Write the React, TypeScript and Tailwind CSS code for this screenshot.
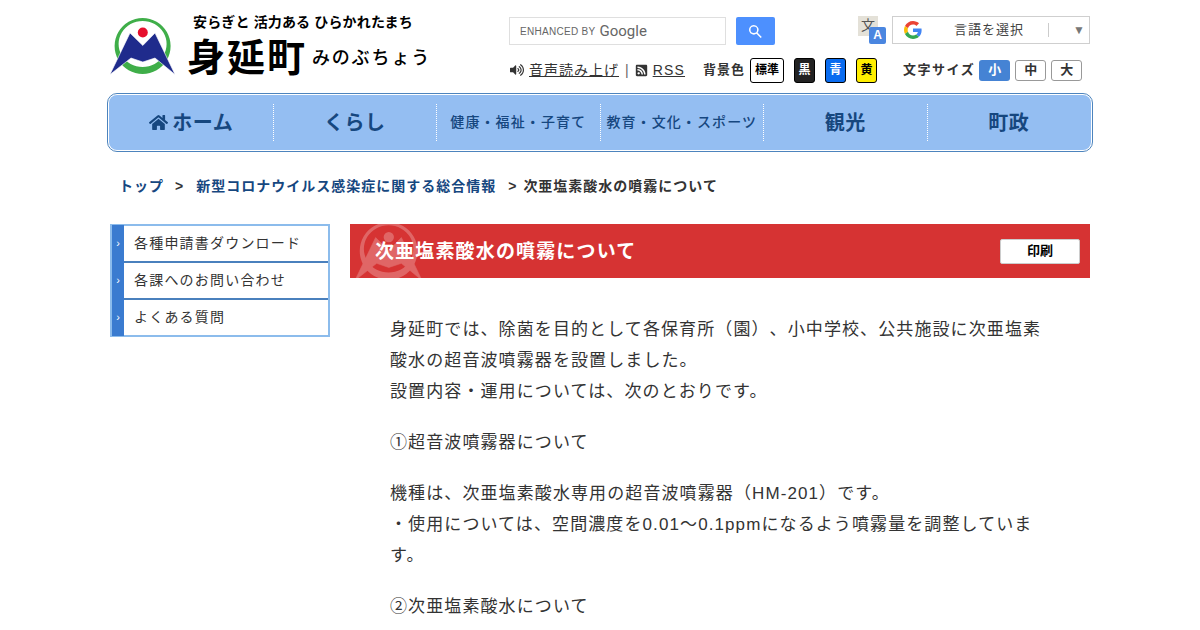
import { FaHome, FaRssSquare, FaVolumeUp } from "react-icons/fa"

const jp = "font-['Liberation_Sans','Noto_Sans_CJK_JP',sans-serif]"

function Logo({ mono = false, className = "" }: { mono?: boolean; className?: string }) {
  return (
    <svg viewBox="0 0 65 60" className={className}>
      <path
        fillRule="evenodd"
        d="M32.6 1a28 28 0 1 0 .01 0ZM32.6 4a24 23 0 1 1-.01 0Z"
        fill={mono ? "#fff" : "#3fae49"}
      />
      <circle cx="32.8" cy="15.5" r="5" fill={mono ? "#fff" : "#e60f2d"} />
      <path
        d="M0 57.500L20 16L32.800 28.500L45 16L65 57.500L45 41L32.800 45L21 41Z"
        fill={mono ? "#fff" : "#1f2b8c"}
        stroke="#fff"
        strokeWidth="0.6"
      />
    </svg>
  )
}

function GoogleG() {
  return (
    <svg viewBox="0 0 48 48" className="w-[18px] h-[18px]">
      <path fill="#EA4335" d="M24 9.500c3.540 0 6.710 1.220 9.210 3.600l6.850-6.850C35.900 2.380 30.470 0 24 0 14.620 0 6.510 5.380 2.560 13.220l7.980 6.190C12.430 13.720 17.740 9.500 24 9.500z" />
      <path fill="#4285F4" d="M46.980 24.550c0-1.570-.15-3.090-.38-4.550H24v9.020h12.940c-.58 2.960-2.260 5.480-4.780 7.180l7.730 6c4.510-4.180 7.090-10.360 7.090-17.650z" />
      <path fill="#FBBC05" d="M10.530 28.590c-.48-1.450-.76-2.990-.76-4.590s.27-3.140.76-4.590l-7.980-6.190C.92 16.460 0 20.120 0 24c0 3.880.92 7.540 2.560 10.780l7.970-6.190z" />
      <path fill="#34A853" d="M24 48c6.480 0 11.930-2.130 15.890-5.810l-7.730-6c-2.150 1.450-4.920 2.300-8.160 2.300-6.260 0-11.570-4.220-13.470-9.910l-7.980 6.190C6.510 42.620 14.620 48 24 48z" />
    </svg>
  )
}

function TranslateIcon() {
  return (
    <div className="relative w-[28px] h-[28px] shrink-0">
      <div className="w-[20px] h-[20px] bg-[#e4e1d8] text-[#555] text-[14px] leading-[19px] text-center">文</div>
      <div className="absolute right-0 bottom-0 w-[17px] h-[17px] bg-[#4a86e0] rounded-[2px] text-white text-[12px] leading-[17px] font-bold text-center">
        A
      </div>
    </div>
  )
}

const navItems = [
  { label: "ホーム", big: true, home: true },
  { label: "くらし", big: true },
  { label: "健康・福祉・子育て", big: false },
  { label: "教育・文化・スポーツ", big: false },
  { label: "観光", big: true },
  { label: "町政", big: true },
]

const sideItems = ["各種申請書ダウンロード", "各課へのお問い合わせ", "よくある質問"]

export default function App() {
  return (
    <div className={`h-[630px] overflow-hidden bg-white text-[#333] [text-spacing-trim:space-all] ${jp}`}>
      <div className="w-[980px] mx-auto">
        {/* Header */}
        <header className="flex h-[93px]">
          <div className="w-[399px] flex pt-[17px]">
            <Logo className="w-[65px] h-[60px] shrink-0" />
            <div className="ml-[14px] -mt-[5px] text-black">
              <div className="ml-[4px] text-[14px] leading-[20px] font-bold tracking-[0.15px] whitespace-nowrap">
                安らぎと 活力ある ひらかれたまち
              </div>
              <div className="flex items-center mt-[3px] whitespace-nowrap">
                <span className="-ml-[2px] text-[38px] leading-[46px] font-bold tracking-[2px]">身延町</span>
                <span className="ml-[5px] text-[18px] tracking-[1.800px] font-medium">みのぶちょう</span>
              </div>
            </div>
          </div>

          <div className="w-[581px] shrink-0">
            <div className="flex pt-[16px] h-[45px]">
              <div className="flex items-center w-[217px] h-[28px] mt-[1px] border border-[#dfdfdf] pl-[10px] text-[#666] whitespace-nowrap">
                <span className="text-[10px] tracking-[0.3px]">ENHANCED BY</span>
                <span className="ml-[4px] text-[15px] font-['Roboto',sans-serif]">Google</span>
              </div>
              <div className="flex items-center justify-center w-[39px] h-[28px] mt-[1px] ml-[10px] bg-[#4d90fe] rounded-[2px]">
                <svg viewBox="0 0 13 13" className="w-[13px] h-[13px]" fill="#fff">
                  <path d="m4.800 0a4.800 4.800 0 0 1 3.800 7.700l4.200 4.200-1.100 1.100-4.200-4.200a4.800 4.800 0 1 1-2.700-8.800zm0 1.500a3.300 3.300 0 1 0 0 6.600 3.300 3.300 0 0 0 0-6.600z" />
                </svg>
              </div>
              <div className="ml-[83px] flex-none">
                <TranslateIcon />
              </div>
              <div className="flex items-center ml-[6px] w-[198px] h-[28px] border border-[#cfcfcf] pl-[11px] text-[13px] text-[#444] tracking-[1px]">
                <GoogleG />
                <span className="ml-[32px] w-[94px] whitespace-nowrap">言語を選択</span>
                <span className="w-px h-[14px] bg-[#ccc]" />
                <span className="ml-[24px] text-[12px] text-[#777]">▼</span>
              </div>
            </div>

            <div className="flex items-center h-[26px] mt-[12px] ml-[1px] text-[14px] whitespace-nowrap">
              <FaVolumeUp className="w-[14px] h-[14px] text-[#333]" />
              <span className="ml-[5px] underline tracking-[1px]">音声読み上げ</span>
              <span className="ml-[6px] text-[#666]">|</span>
              <FaRssSquare className="ml-[6px] w-[13px] h-[13px] text-[#333]" />
              <span className="ml-[5px] underline tracking-[1.200px]">RSS</span>
              <span className="ml-[18px] font-bold text-[13px] tracking-[1px]">背景色</span>
              <span className="ml-[5px] flex items-center justify-center w-[34px] h-[25px] border border-black rounded-[3px] text-[12px] font-bold bg-white text-black">
                標準
              </span>
              <span className="ml-[10px] flex items-center justify-center w-[21px] h-[25px] border border-black rounded-[3px] text-[12px] font-bold bg-[#222] text-white">
                黒
              </span>
              <span className="ml-[10px] flex items-center justify-center w-[21px] h-[25px] border border-black rounded-[3px] text-[12px] font-bold bg-[#0a6cf0] text-white">
                青
              </span>
              <span className="ml-[10px] flex items-center justify-center w-[21px] h-[25px] border border-black rounded-[3px] text-[12px] font-bold bg-[#ffee00] text-black">
                黄
              </span>
              <span className="ml-[26px] font-bold text-[13px] tracking-[1.500px]">文字サイズ</span>
              <span className="ml-[4px] flex items-center justify-center w-[31px] h-[21px] rounded-[3px] text-[13px] font-bold bg-[#4583d4] text-white">
                小
              </span>
              <span className="ml-[5px] flex items-center justify-center w-[31px] h-[21px] border border-[#999] rounded-[3px] text-[13px] font-bold">
                中
              </span>
              <span className="ml-[5px] flex items-center justify-center w-[31px] h-[21px] border border-[#999] rounded-[3px] text-[13px] font-bold">
                大
              </span>
            </div>
          </div>
        </header>

        {/* Global nav */}
        <nav className="-mx-[3px] h-[59px] border border-[#4d84bd] rounded-[10px] p-[1px]">
          <ul className="flex h-full bg-[#94bef2] rounded-[8px] px-[1px] py-[9px]">
            {navItems.map((item, i) => (
              <li
                key={item.label}
                className={`flex-1 flex items-center justify-center whitespace-nowrap text-[#16477f] ${
                  i < 5 ? "border-r border-dotted border-white" : ""
                } ${item.big ? "text-[20px] font-bold tracking-[0.5px]" : "text-[14px] font-medium tracking-[1.100px]"}`}
              >
                {item.home && <FaHome className="w-[19px] h-[19px] mr-[4px]" />}
                {item.label}
              </li>
            ))}
          </ul>
        </nav>

        {/* Breadcrumb */}
        <div className="flex items-center h-[20px] mt-[24px] ml-[9px] text-[14px] font-bold tracking-[1px] whitespace-nowrap text-[#333]">
          <span className="text-[#16477f]">トップ</span>
          <span className="ml-[11px]">&gt;</span>
          <span className="ml-[12px] text-[#16477f]">新型コロナウイルス感染症に関する総合情報</span>
          <span className="ml-[12px]">&gt;</span>
          <span className="ml-[6px]">次亜塩素酸水の噴霧について</span>
        </div>

        <div className="flex mt-[28px]">
          {/* Side menu */}
          <aside className="w-[220px] h-[113px] shrink-0 border-2 border-[#8cbcec]">
            <ul className="h-full flex flex-col">
              {sideItems.map((s, i) => (
                <li
                  key={s}
                  className={`flex-1 flex items-center bg-white ${i < 2 ? "border-b-2 border-[#4a80bd]" : ""}`}
                >
                  <span className="flex items-center justify-center w-[12px] h-[calc(100%+2px)] bg-[#3a7bd0] text-white text-[11px] shrink-0">
                    ›
                  </span>
                  <span className="ml-[10px] text-[14px] tracking-[1.200px] whitespace-nowrap">{s}</span>
                </li>
              ))}
            </ul>
          </aside>

          {/* Main */}
          <main className="ml-[20px] w-[740px]">
            <div className="relative flex items-center justify-between h-[54px] bg-[#d63333] overflow-hidden pl-[25px] pr-[10px]">
              <Logo mono className="absolute left-[5px] top-[-3px] w-[67px] h-[62px] opacity-25" />
              <h1 className="relative mt-[2px] text-[19px] font-bold text-white tracking-[1.150px] whitespace-nowrap">
                次亜塩素酸水の噴霧について
              </h1>
              <div className="relative flex items-center justify-center w-[80px] h-[25px] bg-white rounded-[2px] border border-[#ccc] text-[13px] font-bold text-black">
                印刷
              </div>
            </div>

            <div className="w-[655px] pl-[40px] pt-[36px] box-content text-[17px] leading-[31px] tracking-[1.100px] text-[#333]">
              <p>
                身延町では、除菌を目的として各保育所（園）、小中学校、公共施設に次亜塩素酸水の超音波噴霧器を設置しました。
                <br />
                設置内容・運用については、次のとおりです。
              </p>
              <p className="mt-[20px]">①超音波噴霧器について</p>
              <p className="mt-[20px]">
                機種は、次亜塩素酸水専用の超音波噴霧器（HM-201）です。
                <br />
                ・使用については、空間濃度を0.01～0.1ppmになるよう噴霧量を調整しています。
              </p>
              <p className="mt-[20px]">②次亜塩素酸水について</p>
            </div>
          </main>
        </div>
      </div>
    </div>
  )
}
